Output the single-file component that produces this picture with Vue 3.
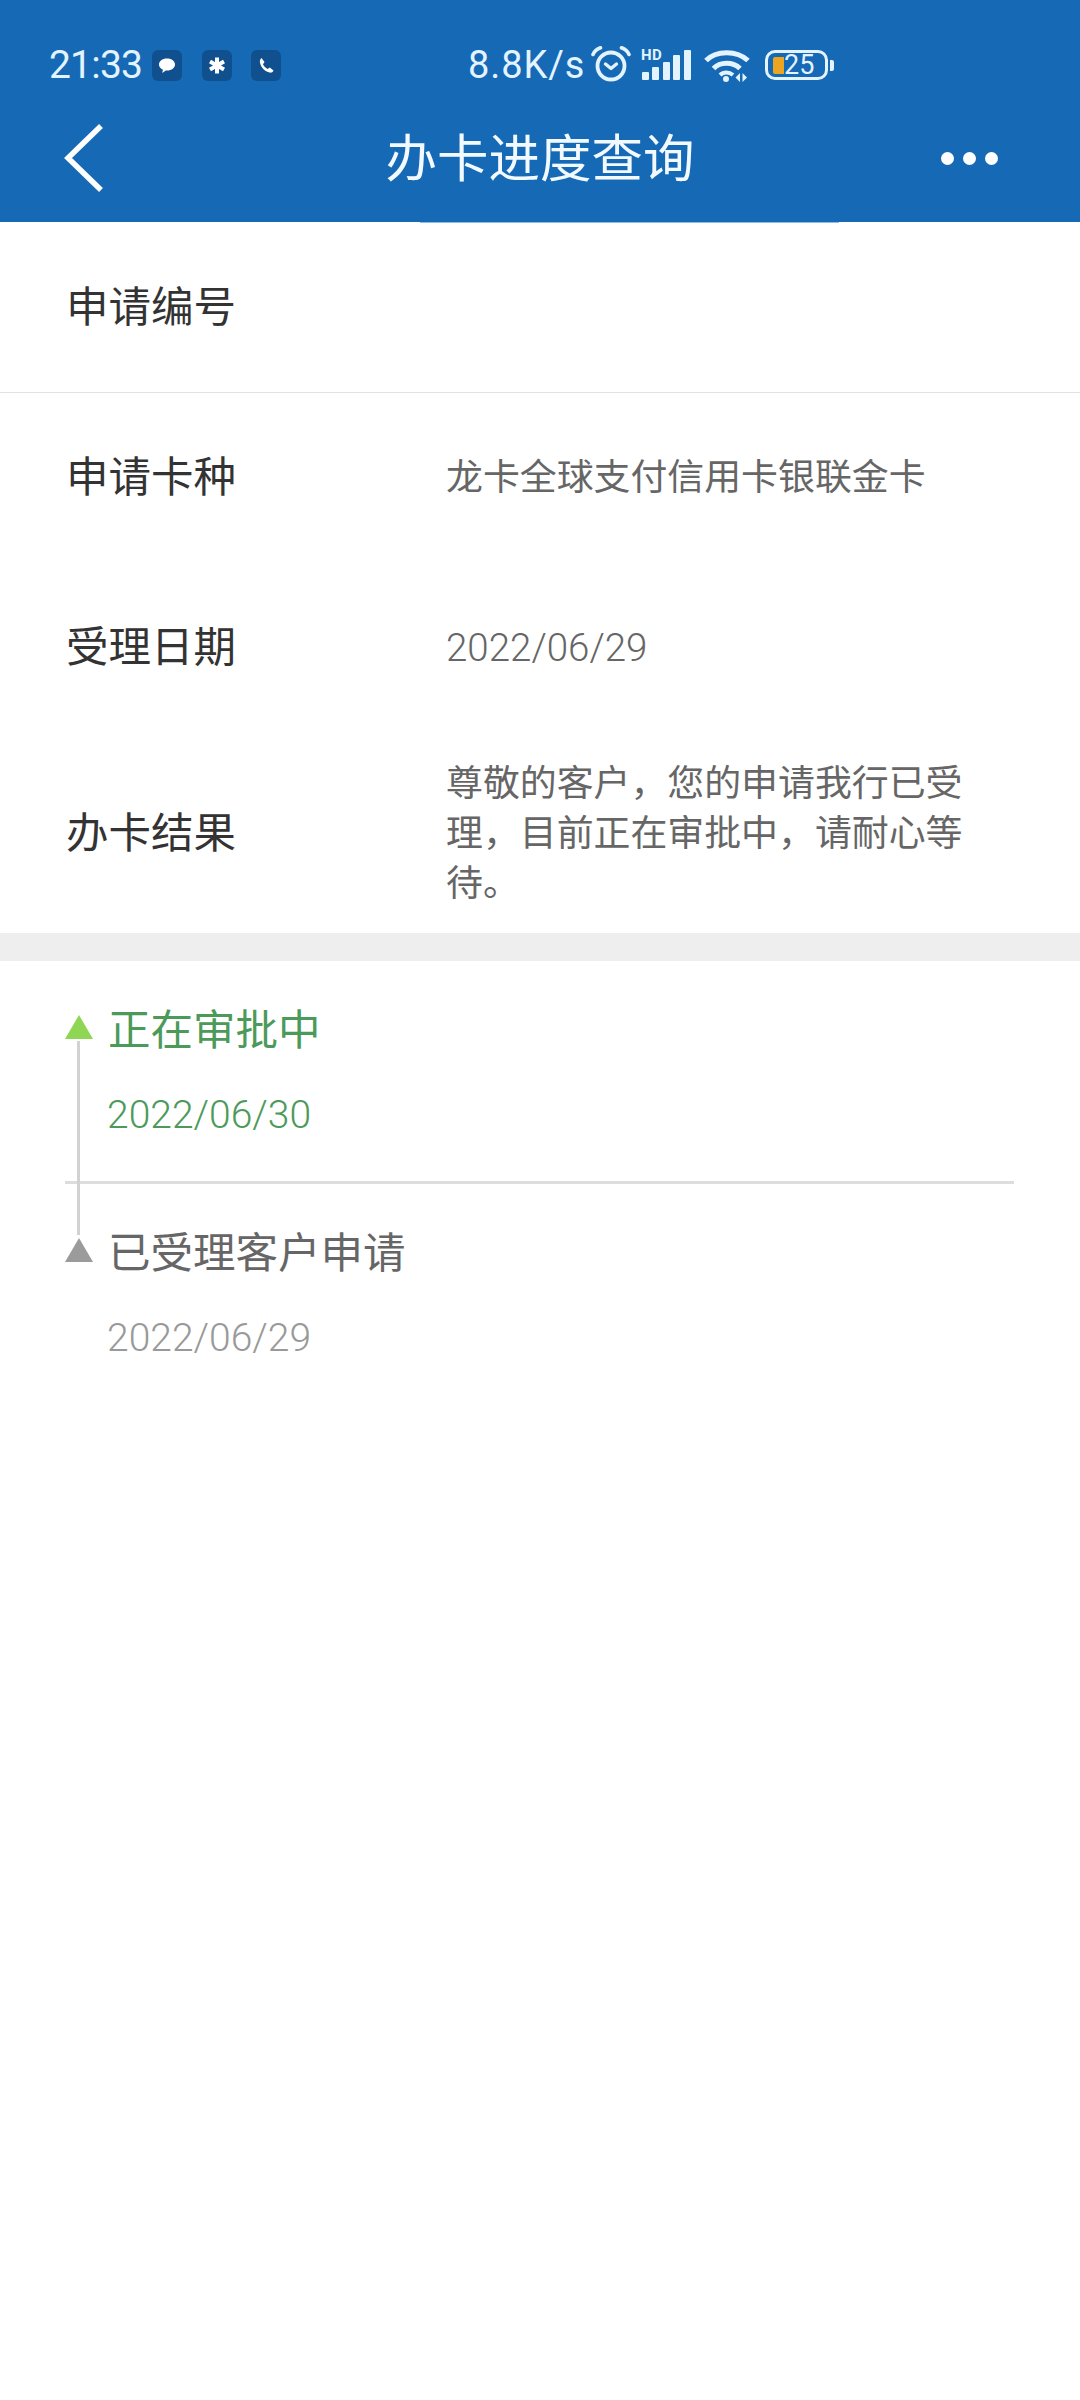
<script setup>
const rows = [
  { label: '申请编号', value: '', divided: true },
  { label: '申请卡种', value: '龙卡全球支付信用卡银联金卡' },
  { label: '受理日期', value: '2022/06/29', numeric: true },
  { label: '办卡结果', value: '尊敬的客户，您的申请我行已受理，目前正在审批中，请耐心等待。', tall: true }
]
const steps = [
  { title: '正在审批中', date: '2022/06/30', active: true },
  { title: '已受理客户申请', date: '2022/06/29', active: false }
]
const bars = [
  { x: 0, y: 22, h: 8 },
  { x: 10, y: 17, h: 13 },
  { x: 21, y: 12, h: 18 },
  { x: 31, y: 5, h: 25 },
  { x: 42, y: 0, h: 30 }
]
</script>

<template>
  <div class="page">
    <header class="header">
      <div class="status">
        <div class="status-left">
          <span class="time">21:33</span>
          <div class="notifs">
            <span class="notif">
              <svg viewBox="0 0 30 31" width="30" height="31"><path d="M15 8.500c-4.800 0-8 2.700-8 6 0 2.300 1.500 4.200 3.900 5.200l-.6 3.300 3.500-2.600c.4 0 .8.100 1.200.1 4.800 0 8-2.700 8-6s-3.200-6-8-6z" fill="#fff"/></svg>
            </span>
            <span class="notif">
              <svg viewBox="0 0 30 31" width="30" height="31"><path d="M15 7.500v16M8 11.500l14 8M22 11.500l-14 8" stroke="#fff" stroke-width="4" fill="none"/></svg>
            </span>
            <span class="notif">
              <svg viewBox="0 0 30 31" width="30" height="31"><path d="M10.500 8l3 4-1.500 2.200c.9 2 2.600 3.700 4.700 4.700l2.100-1.400 3.700 2.900c-.7 1.600-2.200 2.500-3.700 2.200-5-1-9-5.300-9.900-10.400-.2-1.900.6-3.400 1.600-4.200z" fill="#fff"/></svg>
            </span>
          </div>
        </div>
        <div class="status-right">
          <span class="speed">8.8K/s</span>
          <svg class="alarm" viewBox="0 0 40 36" width="40" height="36" fill="none" stroke="#e3f3ff">
            <circle cx="20" cy="20" r="13.500" stroke-width="3.800"/>
            <path d="M2 8.500C3.500 5 6 3 9.500 1.800M38 8.500C36.500 5 34 3 30.500 1.800" stroke-width="3.600" stroke-linecap="round"/>
            <path d="M14.500 18l5.500 4.500 5.500-4.500" stroke-width="3.400" stroke-linecap="round" stroke-linejoin="round"/>
          </svg>
          <div class="signal">
            <span class="hd">HD</span>
            <svg viewBox="0 0 49 30" width="49" height="30">
              <rect v-for="b in bars" :key="b.x" :x="b.x" :y="b.y" width="7" :height="b.h" rx="1" fill="#e3f3ff"/>
            </svg>
          </div>
          <svg class="wifi" viewBox="0 0 46 34" width="46" height="34" fill="none" stroke="#e3f3ff" stroke-width="5">
            <path d="M2 12.500C12 2 33 2 44 12.500"/>
            <path d="M9.500 20.500C16 13.500 29 13.500 36 20.500"/>
            <path d="M16 27c3.500-3.500 9-3.500 13 0" stroke-width="4"/>
            <circle cx="22" cy="31" r="3" fill="#e3f3ff" stroke="none"/>
            <path d="M36 34v-9l-4.500 4.500zM38.500 25v9l4.500-4.500z" fill="#e3f3ff" stroke="none"/>
          </svg>
          <div class="battery">
            <div class="battery-body">
              <span class="battery-fill"></span>
              <span class="battery-text">25</span>
            </div>
            <span class="battery-nub"></span>
          </div>
        </div>
      </div>
      <nav class="nav">
        <div class="nav-left">
          <svg viewBox="0 0 40 68" width="40" height="68" fill="none" stroke="#fff" stroke-width="5.500">
            <path d="M37 2L4 34l33 32"/>
          </svg>
        </div>
        <h1 class="title">办卡进度查询</h1>
        <div class="nav-right">
          <span class="dot"></span>
          <span class="dot"></span>
          <span class="dot"></span>
        </div>
      </nav>
      <span class="edge"></span>
    </header>

    <section class="info">
      <div
        v-for="row in rows"
        :key="row.label"
        class="row"
        :class="{ divided: row.divided, tall: row.tall }"
      >
        <span class="label">{{ row.label }}</span>
        <span class="value" :class="{ numeric: row.numeric }">{{ row.value }}</span>
      </div>
    </section>

    <div class="band"></div>

    <section class="timeline">
      <span class="axis"></span>
      <div
        v-for="step in steps"
        :key="step.title"
        class="step"
        :class="step.active ? 'on' : 'off'"
      >
        <div class="step-head">
          <span class="tri"></span>
          <span class="step-title">{{ step.title }}</span>
        </div>
        <div class="step-date">{{ step.date }}</div>
      </div>
    </section>
  </div>
</template>

<style>
html, body {
  margin: 0;
  background: #fff;
}
</style>

<style scoped>
.page {
  width: 1080px;
  height: 2400px;
  background: #fff;
  overflow: hidden;
  font-family: Roboto, "Noto Sans CJK SC", sans-serif;
}

.header {
  position: relative;
  height: 222px;
  background: #1569b5;
  display: flex;
  flex-direction: column;
}

.status {
  height: 86px;
  margin-top: 22px;
  padding: 0 246px 0 49px;
  display: flex;
  justify-content: space-between;
  align-items: center;
  color: #e3f3ff;
}

.status-left,
.status-right,
.notifs {
  display: flex;
  align-items: center;
}

.time {
  width: 103px;
  font-size: 39px;
  letter-spacing: -0.800px;
  line-height: 46px;
}

.notifs {
  gap: 19.500px;
}

.notif {
  width: 30px;
  height: 31px;
  border-radius: 6px;
  background: #11508f;
  display: block;
}

.notif svg {
  display: block;
}

.speed {
  font-size: 38px;
  line-height: 46px;
  letter-spacing: 0.900px;
  width: 123px;
}

.alarm {
  margin-top: -2px;
}

.signal {
  position: relative;
  width: 49px;
  height: 30px;
  margin-left: 11px;
}

.signal svg {
  display: block;
}

.hd {
  position: absolute;
  left: -1px;
  top: -2px;
  font-size: 15px;
  line-height: 14px;
  font-weight: 700;
  letter-spacing: 0.500px;
  font-family: Roboto, sans-serif;
}

.wifi {
  margin-left: 13px;
}

.battery {
  margin-left: 15px;
  display: flex;
  align-items: center;
  gap: 2px;
}

.battery-body {
  box-sizing: border-box;
  width: 63px;
  height: 30px;
  border: 3px solid #e3f3ff;
  border-radius: 10px;
  display: flex;
  align-items: center;
  padding-left: 5px;
}

.battery-fill {
  width: 11px;
  height: 17px;
  background: #eda420;
  border-radius: 2px 0 0 2px;
}

.battery-text {
  font-size: 27px;
  line-height: 24px;
}

.battery-nub {
  width: 4px;
  height: 11px;
  background: #e3f3ff;
  border-radius: 0 2px 2px 0;
}

.nav {
  height: 100px;
  display: grid;
  grid-template-columns: 1fr auto 1fr;
  align-items: center;
}

.nav-left {
  padding-left: 64px;
  display: flex;
}

.title {
  margin: 0;
  padding-top: 3px;
  color: #f2faff;
  font-size: 51.500px;
  line-height: 60px;
  font-weight: 400;
}

.nav-right {
  display: flex;
  justify-content: flex-end;
  padding-right: 82px;
  gap: 9px;
}

.dot {
  width: 13px;
  height: 13px;
  border-radius: 50%;
  background: #fff;
}

.edge {
  position: absolute;
  left: 420px;
  right: 241px;
  bottom: -1px;
  height: 1px;
  background: #8cbde8;
}

.row {
  box-sizing: border-box;
  height: 170px;
  padding: 2px 0 0 66px;
  display: flex;
  align-items: center;
}

.row.divided {
  box-shadow: 0 1px 0 #e2e2e2;
}

.row.tall {
  height: 201px;
}

.label {
  width: 380px;
  flex: none;
  color: #333;
  font-size: 42.500px;
  line-height: 60px;
}

.value {
  width: 520px;
  color: #666;
  font-size: 36.900px;
  line-height: 50px;
}

.value.numeric {
  font-size: 38.500px;
  font-weight: 300;
}

.band {
  height: 28px;
  background: #eee;
}

.timeline {
  position: relative;
}

.axis {
  position: absolute;
  left: 77px;
  top: 80px;
  width: 3px;
  height: 194px;
  background: #d2d2d2;
}

.step {
  padding: 39px 0 38px 65px;
}

.step.on {
  background: linear-gradient(#ddd, #ddd) 65px 100% / 949px 3px no-repeat;
  padding-bottom: 39px;
}

.step-head {
  display: flex;
  align-items: flex-start;
  gap: 15px;
  height: 60px;
}

.tri {
  margin-top: 15px;
  width: 0;
  height: 0;
  border-left: 14px solid transparent;
  border-right: 14px solid transparent;
}

.on .tri {
  border-bottom: 24px solid #8ed653;
}

.off .tri {
  border-bottom: 24px solid #9b9b9b;
}

.step-title {
  margin-top: 1px;
  font-size: 42.500px;
  line-height: 60px;
}

.on .step-title {
  color: #4c9a5a;
}

.off .step-title {
  color: #666;
}

.step-date {
  margin: 25px 0 0 42px;
  font-size: 39px;
  line-height: 60px;
  font-weight: 300;
}

.on .step-date {
  color: #4c9a5a;
}

.off .step-date {
  color: #999;
}
</style>
